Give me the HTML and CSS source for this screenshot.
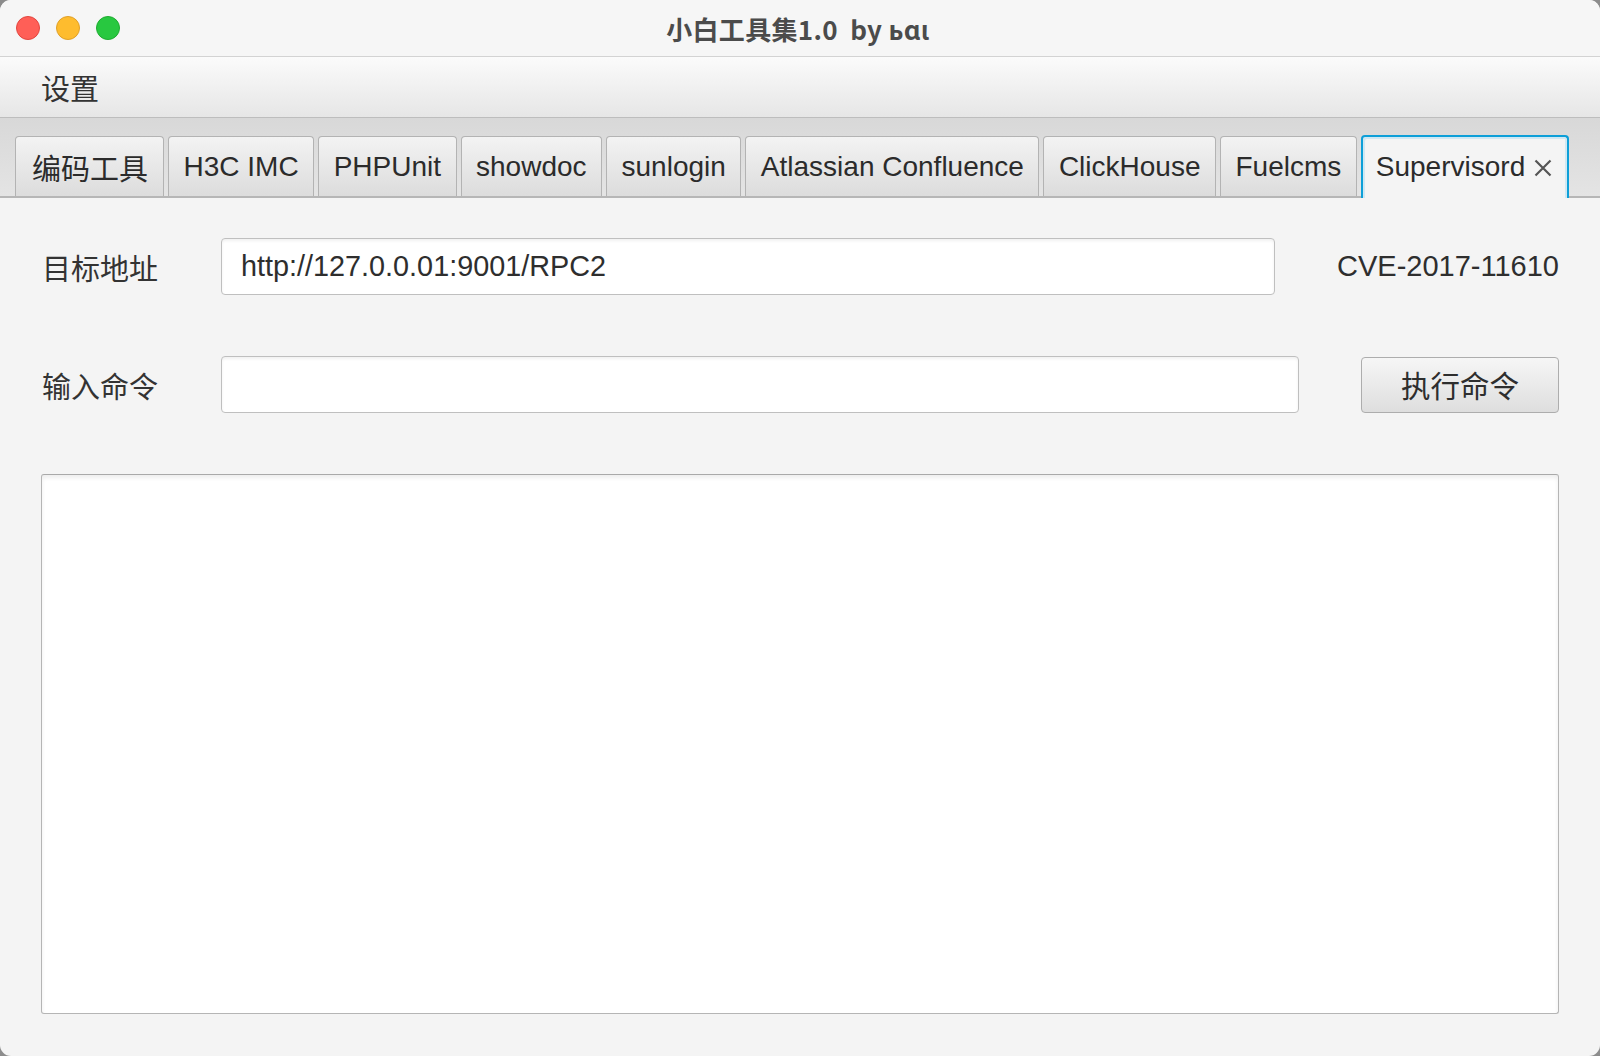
FILE: index.html
```html
<!DOCTYPE html>
<html lang="zh">
<head>
<meta charset="utf-8">
<title>小白工具集1.0 by bai</title>
<link rel="stylesheet" href="styles.css">
</head>
<body>
<div class="window">
  <header class="titlebar">
    <div class="lights">
      <span class="light red"></span>
      <span class="light yellow"></span>
      <span class="light green"></span>
    </div>
    <div class="title">小白工具集1.0&nbsp;&nbsp;by ьɑι</div>
    <div class="spacer"></div>
  </header>
  <nav class="menubar"><span class="menu cjk">设置</span></nav>
  <div class="tabbar">
    <div class="tab cjk">编码工具</div>
    <div class="tab">H3C IMC</div>
    <div class="tab">PHPUnit</div>
    <div class="tab">showdoc</div>
    <div class="tab">sunlogin</div>
    <div class="tab">Atlassian Confluence</div>
    <div class="tab">ClickHouse</div>
    <div class="tab">Fuelcms</div>
    <div class="tab selected">Supervisord<svg class="close" viewBox="0 0 18 18" width="18" height="18"><path d="M1.5 1.5 L16.5 16.5 M16.5 1.5 L1.5 16.5" stroke="#555" stroke-width="2.2" fill="none"/></svg></div>
  </div>
  <main class="content">
    <div class="row">
      <span class="label cjk">目标地址</span>
      <div class="field">http://127.0.0.01:9001/RPC2</div>
      <span class="cve">CVE-2017-11610</span>
    </div>
    <div class="row">
      <span class="label cjk">输入命令</span>
      <div class="field"></div>
      <button class="btn cjk">执行命令</button>
    </div>
    <div class="output"></div>
  </main>
</div>
</body>
</html>
```
FILE: styles.css
```css
html, body {
  margin: 0;
  padding: 0;
}
body {
  width: 1600px;
  height: 1056px;
  background: #8c8c8c;
  font-family: "Liberation Sans", "Noto Sans CJK SC", sans-serif;
  color: #2e2e2e;
  overflow: hidden;
}
.cjk {
  font-family: "Noto Sans CJK SC", "Liberation Sans", sans-serif;
}
.window {
  width: 1600px;
  height: 1056px;
  border-radius: 11px;
  overflow: hidden;
  display: flex;
  flex-direction: column;
  background: #f4f4f4;
}
.titlebar {
  height: 56px;
  flex: none;
  display: grid;
  grid-template-columns: 1fr auto 1fr;
  align-items: center;
  background: #f6f6f6;
  border-bottom: 1px solid #d3d3d3;
}
.lights {
  display: flex;
  gap: 16px;
  padding-left: 16px;
}
.light {
  width: 22px;
  height: 22px;
  border-radius: 50%;
  border: 1px solid transparent;
}
.red { background: #ff5f57; border-color: #e2463f; }
.yellow { background: #febc2e; border-color: #e0a028; }
.green { background: #28c840; border-color: #1eac30; }
.title {
  font-family: "Noto Sans CJK SC", sans-serif;
  font-weight: 700;
  font-size: 26px;
  color: #4b4b4b;
  letter-spacing: 0.3px;
  margin-left: -4px;
}
.menubar {
  height: 60px;
  flex: none;
  display: flex;
  align-items: center;
  padding-left: 41px;
  background: linear-gradient(#fbfbfb, #e6e6e6);
  border-bottom: 1px solid #bdbdbd;
}
.menu {
  font-size: 29px;
  color: #333;
  line-height: 1;
}
.tabbar {
  height: 78px;
  flex: none;
  display: flex;
  align-items: flex-end;
  gap: 4px;
  padding-left: 15px;
  background: linear-gradient(#d8d8d8, #e4e4e4);
  border-bottom: 2px solid #b6b6b6;
}
.tab {
  height: 60px;
  box-sizing: border-box;
  display: flex;
  align-items: center;
  padding: 0 14.5px;
  font-size: 28px;
  color: #2b2b2b;
  background: linear-gradient(#f3f3f3, #dcdcdc);
  border: 1px solid #b3b3b3;
  border-bottom: none;
  border-radius: 4px 4px 0 0;
  white-space: nowrap;
}
.tab.cjk {
  font-size: 29px;
  padding: 0 15px 0 16px;
}
.tab.selected {
  height: 63px;
  margin-bottom: -2px;
  padding: 0 15px 1px 13px;
  background: #f4f4f4;
  border: 2px solid #0d9fd8;
  border-bottom: none;
  box-shadow: inset 2px 2px 0 #cfe8f3, inset -2px 0 0 #cfe8f3;
  border-radius: 4px 4px 0 0;
}
.close {
  margin-left: 9px;
  margin-top: 1px;
}
.content {
  flex: 1;
  display: flex;
  flex-direction: column;
  gap: 61px;
  padding: 40px 41px 42px 41px;
  min-height: 0;
}
.row {
  height: 57px;
  display: flex;
  align-items: center;
  gap: 61px;
}
.label {
  width: 118px;
  flex: none;
  font-size: 29px;
  color: #333;
  white-space: nowrap;
  margin-left: 1px;
}
.field {
  flex: 1;
  height: 100%;
  box-sizing: border-box;
  background: #fff;
  border: 1px solid #bfbfbf;
  border-radius: 4px;
  box-shadow: inset 0 2px 3px rgba(0,0,0,0.06);
  display: flex;
  align-items: center;
  padding: 0 19px;
  font-size: 28.8px;
  color: #2e2e2e;
  white-space: nowrap;
}
.field + .cve,
.field + .btn {
  margin-left: 1px;
}
.cve {
  font-size: 29px;
  color: #2e2e2e;
  white-space: nowrap;
}
.btn {
  width: 198px;
  height: 56px;
  margin-top: 1px;
  box-sizing: border-box;
  background: linear-gradient(#f6f6f6, #dedede);
  border: 1px solid #adadad;
  border-radius: 4px;
  font-size: 29.5px;
  color: #2e2e2e;
  padding: 0;
  line-height: 1;
}
.output {
  flex: 1;
  background: #fff;
  border: 1px solid #b5b5b5;
  border-top-color: #a9a9a9;
  border-radius: 3px;
  box-shadow: inset 0 3px 4px rgba(0,0,0,0.07);
}
```
